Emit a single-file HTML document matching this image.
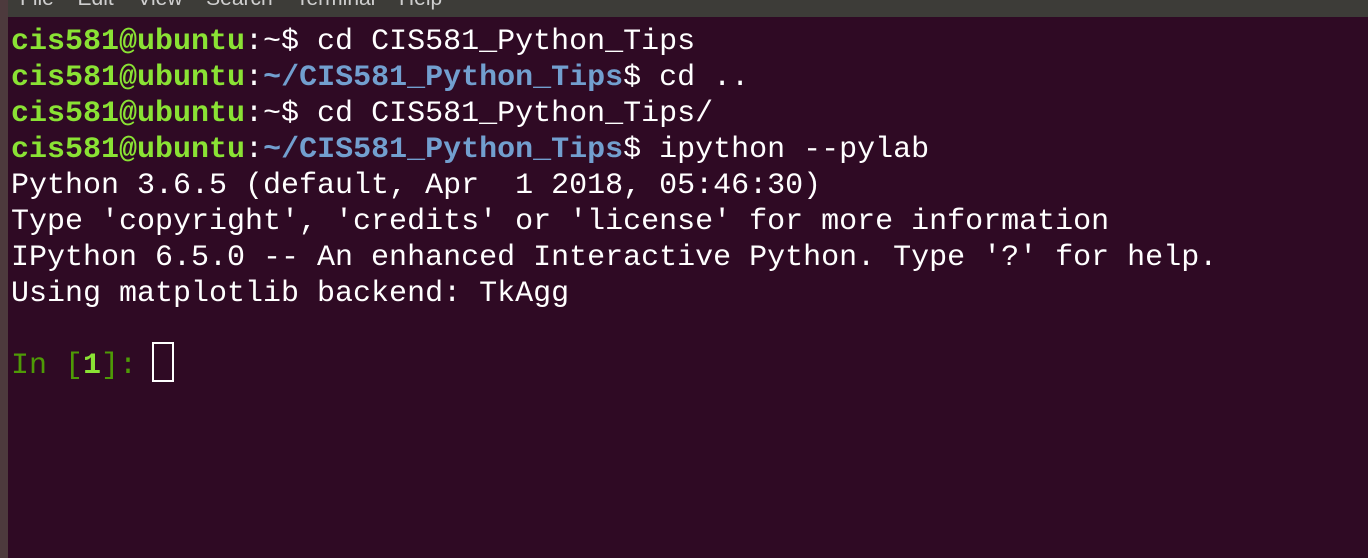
<!DOCTYPE html>
<html><head><style>
html,body{margin:0;padding:0;width:1368px;height:558px;overflow:hidden;background:#2f0a24;}
.left{position:absolute;left:0;top:0;width:8px;height:558px;background:#4d3a3d;}
.menu{position:absolute;left:8px;top:0;width:1360px;height:17px;background:#3d3c38;overflow:hidden;color:#cfcfcf;font:21px "Liberation Sans",sans-serif;}
.menu span{position:absolute;top:-13px;word-spacing:6px;}
.term{position:absolute;left:11px;top:24px;font-family:"Liberation Mono",monospace;font-size:30px;line-height:36px;color:#ffffff;white-space:pre;}
.g{color:#8ae234;font-weight:bold}
.b{color:#729fcf;font-weight:bold}
.d{color:#4e9a06}
.l{color:#8ae234;font-weight:bold}
.cur{position:absolute;left:152px;top:342px;width:18px;height:36px;border:2px solid #fff;}
</style></head><body>
<div class="left"></div>
<div class="menu"><span style="left:12px">File&nbsp; Edit&nbsp; View&nbsp; Search&nbsp; Terminal&nbsp; Help</span></div>
<div class="term"><span class="g">cis581@ubuntu</span>:~$ cd CIS581_Python_Tips
<span class="g">cis581@ubuntu</span>:<span class="b">~/CIS581_Python_Tips</span>$ cd ..
<span class="g">cis581@ubuntu</span>:~$ cd CIS581_Python_Tips/
<span class="g">cis581@ubuntu</span>:<span class="b">~/CIS581_Python_Tips</span>$ ipython --pylab
Python 3.6.5 (default, Apr  1 2018, 05:46:30)
Type 'copyright', 'credits' or 'license' for more information
IPython 6.5.0 -- An enhanced Interactive Python. Type '?' for help.
Using matplotlib backend: TkAgg

<span class="d">In [</span><span class="l">1</span><span class="d">]: </span></div>
<div class="cur"></div>
</body></html>
